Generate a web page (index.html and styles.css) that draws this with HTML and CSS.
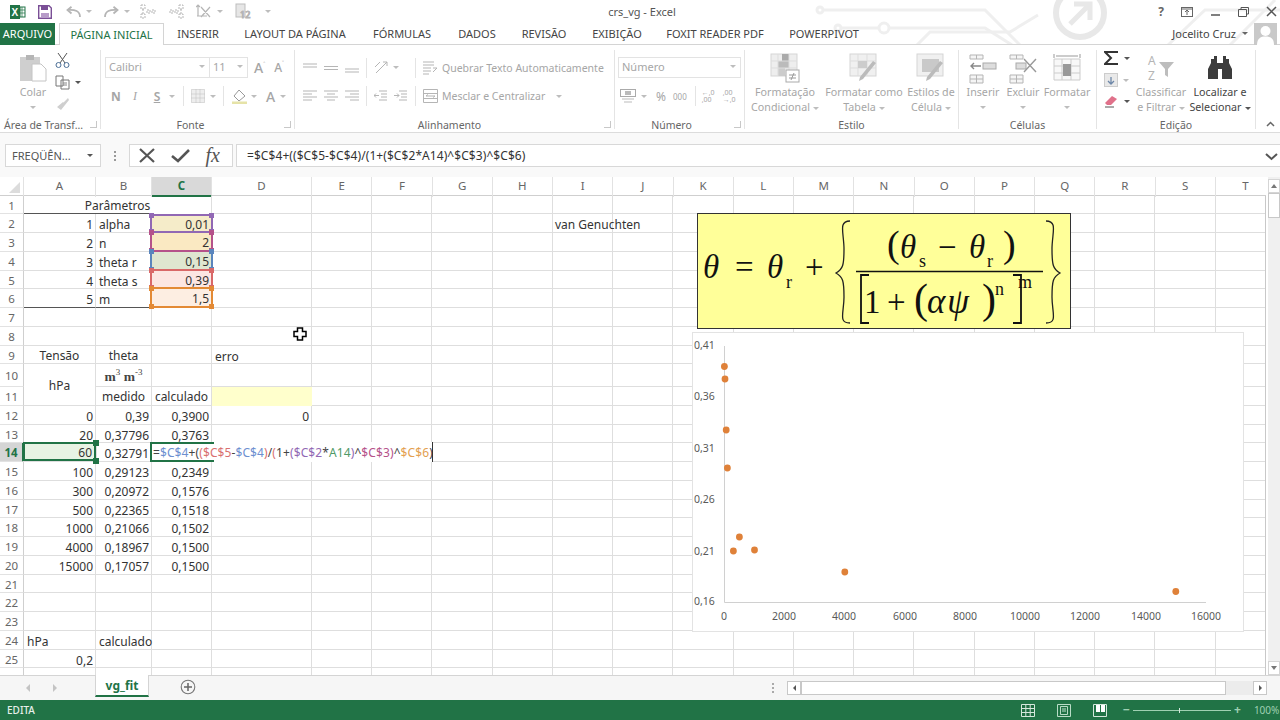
FILE: index.html
```html
<!DOCTYPE html>
<html lang="pt">
<head>
<meta charset="utf-8">
<title>crs_vg - Excel</title>
<link rel="stylesheet" href="styles.css">
</head>
<body>
<div class="app">

<header class="titlebar">
  <svg class="circuit" width="470" height="45" viewBox="810 0 470 45"><g fill="none" stroke="#efefef" stroke-width="3"><circle cx="820" cy="10" r="3"/><path d="M823 10H985L1020 45"/><circle cx="838" cy="28" r="3"/><path d="M841 28H878"/><circle cx="884" cy="28" r="5"/><path d="M889 28H985L1012 45"/><path d="M917 45L930 32H1010L1038 15"/><circle cx="1080" cy="13" r="24" stroke-width="6" stroke="#e8e8e8"/><path d="M1070 24L1090 4M1074 4H1090V20" stroke="#e8e8e8" stroke-width="5"/><path d="M1168 45L1205 10H1280"/><path d="M1230 45L1275 0"/></g></svg>
  <div class="qat">
    <svg class="ic xl" width="16" height="14" viewBox="0 0 16 14"><rect x="0" y="0" width="10" height="14" fill="#217346"/><rect x="10" y="2" width="5" height="10" fill="#fff" stroke="#217346"/><path d="M12 2v10M10 5h5M10 8h5" stroke="#217346" stroke-width=".7"/><text x="1.500" y="11" class="xl-x">X</text></svg>
    <svg class="ic save" width="14" height="14" viewBox="0 0 14 14"><path d="M.7.7H11L13.300 3V13.300H.7Z" fill="none" stroke="#7a4f96" stroke-width="1.400"/><rect x="3" y="1" width="7" height="4" fill="#7a4f96"/><rect x="3" y="8" width="8" height="5" fill="#b79cc8"/></svg>
    <svg class="ic gr undo" width="15" height="12" viewBox="0 0 15 12"><path d="M14 11C14 5 9 3.500 2 4M5.500 .8L1.500 4L5.500 7.500" fill="none" stroke-width="1.800"/></svg><i class="caret lt cq1"></i>
    <svg class="ic gr redo" width="15" height="12" viewBox="0 0 15 12"><path d="M1 11C1 5 6 3.500 13 4M9.500 .8L13.500 4L9.500 7.500" fill="none" stroke-width="1.800"/></svg><i class="caret lt cq1"></i>
    <svg class="ic gr q3" width="16" height="15" viewBox="0 0 16 15"><path d="M1 1h4v4H1zM1 10h4v4H1zM7 6h3v3H7zM12 6h3v3h-3zM3 5v5" fill="none" stroke-dasharray="2 1"/></svg>
    <svg class="ic gr q4" width="16" height="15" viewBox="0 0 16 15"><path d="M10 1h4v4h-4zM10 10h4v4h-4zM1 6h3v3H1zM6 6h3v3H6zM12 5v5" fill="none" stroke-dasharray="2 1"/></svg>
    <svg class="ic gr q5" width="18" height="15" viewBox="0 0 18 15"><path d="M2 1V12M0 3L2 1L4 3M1 12h10M5 3L14 13M14 3L5 13" fill="none" stroke-width="1.200"/></svg><i class="caret lt cq2"></i>
    <svg class="ic gr q6" width="18" height="22" viewBox="0 0 18 22"><rect x="1" y="3" width="9" height="13" fill="#e6e6e6" stroke="#bdbdbd"/><text x="5" y="17" class="twelve">12</text></svg>
    <i class="caret lt cq3"></i>
  </div>
  <div class="doc-title">crs_vg - Excel</div>
  <div class="winctl">
    <span class="help">?</span>
    <svg width="12" height="10" viewBox="0 0 12 10"><rect x=".5" y=".5" width="11" height="9" fill="none" stroke="#666"/><path d="M6 8V3M4 5L6 3L8 5M.5 2h11" fill="none" stroke="#666"/></svg>
    <svg width="11" height="10" viewBox="0 0 11 10"><path d="M1 8H10" stroke="#555" stroke-width="1.500"/></svg>
    <svg width="11" height="10" viewBox="0 0 11 10"><path d="M3 2.500V.5H10.500V7H8.500M.5 2.500H8.500V9.500H.5Z" fill="none" stroke="#555"/></svg>
    <svg width="11" height="11" viewBox="0 0 11 11"><path d="M1 1L10 10M10 1L1 10" stroke="#555" stroke-width="1.500"/></svg>
  </div>
</header>

<nav class="tabs">
  <div class="tab-file">ARQUIVO</div>
  <div class="tab tab-active">PÁGINA INICIAL</div>
  <div class="tab w-ins">INSERIR</div>
  <div class="tab w-lay">LAYOUT DA PÁGINA</div>
  <div class="tab w-for">FÓRMULAS</div>
  <div class="tab w-dad">DADOS</div>
  <div class="tab w-rev">REVISÃO</div>
  <div class="tab w-exi">EXIBIÇÃO</div>
  <div class="tab w-fox">FOXIT READER PDF</div>
  <div class="tab w-pow">POWERPIVOT</div>
  <div class="user"><span>Jocelito Cruz</span><i class="caret"></i>
    <svg class="avatar" width="23" height="22" viewBox="0 0 23 22"><rect width="23" height="22" fill="#c9c9c9"/><circle cx="11.500" cy="8" r="5" fill="#fff"/><path d="M3 22C3 15 7 13.500 11.500 13.500S20 15 20 22Z" fill="#fff"/></svg>
  </div>
</nav>

<section class="ribbon">
  <div class="grp g-clip">
    <div class="body clip-body">
      <div class="big colar">
        <svg class="bigicon" width="28" height="28" viewBox="0 0 28 28"><rect x="1" y="3" width="20" height="24" fill="#cfcfcf"/><rect x="7" y="1" width="8" height="5" fill="#b5b5b5"/><path d="M13 10H22L27 15V27H13Z" fill="#fff" stroke="#c4c4c4"/></svg>
        <div class="big-t">Colar</div><i class="caret lt"></i>
      </div>
      <div class="smallcol">
        <svg class="ic dk" width="15" height="16" viewBox="0 0 15 16"><path d="M3 1L10 11M12 1L5 11" fill="none" stroke="#555"/><circle cx="3.500" cy="13" r="2.500" fill="none" stroke="#4a6e96"/><circle cx="11.500" cy="13" r="2.500" fill="none" stroke="#4a6e96"/></svg>
        <div class="smrow"><svg width="15" height="15" viewBox="0 0 15 15"><path d="M1 1H8V11H1ZM6 5H14V14H6Z" fill="#fff" stroke="#777"/><path d="M8 8H12M8 10H12" stroke="#888"/></svg><i class="caret dk2"></i></div>
        <svg width="15" height="14" viewBox="0 0 15 14"><path d="M8 6L13 1L14 3L10 8ZM2 10L8 5L10 8L6 13Z" fill="#cfcfcf"/></svg>
      </div>
    </div>
    <div class="glabel lab-clip">Área de Transf...</div>
    <i class="launch"></i>
  </div>

  <div class="grp g-font">
    <div class="body col-body">
      <div class="frow f1">
        <div class="sel sel-font">Calibri<i class="caret lt"></i></div>
        <div class="sel sel-size">11<i class="caret lt"></i></div>
        <span class="fa a-big">A<sup>˄</sup></span>
        <span class="fa a-small">A<sup>˅</sup></span>
      </div>
      <div class="frow f2">
        <b class="fm fm-n">N</b><em class="fm fm-i">I</em><span class="fm fm-s">S</span><i class="caret lt c-s"></i><u class="sep s1"></u>
        <svg width="14" height="14" viewBox="0 0 14 14"><path d="M.5.500H13.500V13.500H.5ZM5 .5V13.500M9 .5V13.500M.5 5H13.500M.5 9H13.500" fill="#eee" stroke="#bfbfbf" stroke-dasharray="1 1"/></svg><i class="caret lt c-b"></i><u class="sep s2"></u>
        <svg width="15" height="15" viewBox="0 0 15 15"><path d="M7 1L13 7L7 12L2 7Z" fill="#fff" stroke="#999"/><rect y="12.500" width="15" height="2.500" fill="#e6e3a8"/></svg><i class="caret lt c-f"></i>
        <span class="fa a-col">A</span><i class="caret lt c-a"></i>
      </div>
    </div>
    <div class="glabel lab-font">Fonte</div>
    <i class="launch"></i>
  </div>

  <div class="grp g-align">
    <div class="body col-body">
      <div class="frow a1">
        <svg class="li" width="14" height="10" viewBox="0 0 14 10"><path d="M0 1H14M0 4H14"/></svg>
        <svg class="li" width="14" height="10" viewBox="0 0 14 10"><path d="M0 3.500H14M0 6.500H14"/></svg>
        <svg class="li" width="14" height="10" viewBox="0 0 14 10"><path d="M0 6H14M0 9H14"/></svg>
        <u class="sep"></u>
        <svg class="li" width="15" height="15" viewBox="0 0 15 15"><path d="M2 13L13 2M9 2H13V6M1 7L6 2"/></svg><i class="caret lt c-o"></i>
        <u class="sep s4"></u>
        <svg class="li" width="15" height="14" viewBox="0 0 15 14"><path d="M0 1H11M0 4H11M0 7H8M0 10H8M0 13H6M10 11L14 7L10 7"/></svg>
        <span class="wt">Quebrar Texto Automaticamente</span>
      </div>
      <div class="frow a2">
        <svg class="li" width="14" height="12" viewBox="0 0 14 12"><path d="M0 1H14M0 4H9M0 7H14M0 10H9"/></svg>
        <svg class="li" width="14" height="12" viewBox="0 0 14 12"><path d="M0 1H14M3 4H11M0 7H14M3 10H11"/></svg>
        <svg class="li" width="14" height="12" viewBox="0 0 14 12"><path d="M0 1H14M5 4H14M0 7H14M5 10H14"/></svg>
        <u class="sep"></u>
        <svg class="li" width="13" height="12" viewBox="0 0 13 12"><path d="M5 1H13M7 4H13M7 7H13M5 10H13M5 5.500H0M2 3.500L0 5.500L2 7.500"/></svg>
        <svg class="li" width="13" height="12" viewBox="0 0 13 12"><path d="M5 1H13M7 4H13M7 7H13M5 10H13M0 5.500H5M3 3.500L5 5.500L3 7.500"/></svg>
        <u class="sep s5"></u>
        <svg class="li" width="15" height="14" viewBox="0 0 15 14"><path d="M.5.500H14.500V13.500H.5ZM.5 4.500H14.500M.5 9.500H14.500M3 7H12M3 7L5 5.500M12 7L10 8.500"/></svg>
        <span class="wt">Mesclar e Centralizar</span><i class="caret lt c-m"></i>
      </div>
    </div>
    <div class="glabel lab-align">Alinhamento</div>
    <i class="launch"></i>
  </div>

  <div class="grp g-num">
    <div class="body col-body">
      <div class="frow n1"><div class="sel sel-num">Número<i class="caret lt"></i></div></div>
      <div class="frow n2">
        <svg width="16" height="14" viewBox="0 0 16 14"><rect x=".5" y=".5" width="15" height="7" fill="#fff" stroke="#aaa"/><rect x="5" y="2" width="6" height="4" fill="#bbb"/><path d="M2 10H14M4 13H12" stroke="#bbb"/></svg><i class="caret lt c-cur"></i>
        <span class="pct">%</span><span class="mil">000</span><u class="sep s6"></u>
        <span class="dec">←,0<br>,00</span><span class="dec d2">,00<br>→,0</span>
      </div>
    </div>
    <div class="glabel lab-num">Número</div>
    <i class="launch"></i>
  </div>

  <div class="grp g-est">
    <div class="body">
      <div class="big b-fc">
        <svg class="bigicon" width="30" height="30" viewBox="0 0 30 30"><rect x="1" y="1" width="26" height="22" fill="#eee" stroke="#d5d5d5"/><rect x="12" y="1" width="7" height="7" fill="#aaa"/><rect x="8" y="8" width="11" height="7" fill="#bbb"/><rect x="8" y="15" width="7" height="8" fill="#ccc"/><path d="M1 8H27M1 15H27M8 1V23M19 1V23" stroke="#ddd"/><rect x="16" y="17" width="13" height="12" fill="#fff" stroke="#aaa"/><path d="M19 22H26M19 25H26M24 20L21 27" stroke="#999"/></svg>
        <div class="big-t">Formatação<br>Condicional<i class="caret lt in"></i></div>
      </div>
      <div class="big b-ft">
        <svg class="bigicon" width="30" height="30" viewBox="0 0 30 30"><rect x="1" y="1" width="26" height="22" fill="#f0f0f0" stroke="#d5d5d5"/><path d="M1 8H27M1 15H27M9 1V23M18 1V23" stroke="#ddd"/><rect x="9" y="8" width="9" height="7" fill="#ccc"/><path d="M27 10L14 26L10 28L11 24L24 8Z" fill="#bbb"/></svg>
        <div class="big-t">Formatar como<br>Tabela<i class="caret lt in"></i></div>
      </div>
      <div class="big b-ec">
        <svg class="bigicon" width="30" height="30" viewBox="0 0 30 30"><rect x="1" y="1" width="26" height="22" fill="#f0f0f0" stroke="#d5d5d5"/><rect x="6" y="6" width="17" height="13" fill="#c9c9c9"/><path d="M27 10L14 26L10 28L11 24L24 8Z" fill="#bbb"/></svg>
        <div class="big-t">Estilos de<br>Célula<i class="caret lt in"></i></div>
      </div>
    </div>
    <div class="glabel">Estilo</div>
  </div>

  <div class="grp g-cel">
    <div class="body">
      <div class="big b-ins">
        <svg class="bigicon" width="28" height="30" viewBox="0 0 28 30"><path d="M1 2H14V6H1ZM7.500 2V6M1 22H14V30H1ZM7.500 22V30M1 26H14" fill="#f5f5f5" stroke="#b5b5b5"/><path d="M12 13H2M5 10L2 13L5 16" fill="none" stroke="#888" stroke-width="1.400"/><rect x="14" y="10" width="13" height="6" fill="#ddd" stroke="#aaa"/></svg>
        <div class="big-t">Inserir</div><i class="caret lt"></i>
      </div>
      <div class="big b-exc">
        <svg class="bigicon" width="28" height="30" viewBox="0 0 28 30"><path d="M1 2H14V6H1ZM7.500 2V6M1 22H14V30H1ZM7.500 22V30M1 26H14" fill="#f5f5f5" stroke="#b5b5b5"/><rect x="7" y="10" width="10" height="6" fill="#ddd" stroke="#aaa"/><path d="M15 6L27 19M27 6L15 19" stroke="#999" stroke-width="1.400"/></svg>
        <div class="big-t">Excluir</div><i class="caret lt"></i>
      </div>
      <div class="big b-fmt">
        <svg class="bigicon" width="28" height="30" viewBox="0 0 28 30"><path d="M1 6H27V27H1ZM1 13H27M1 20H27M9 6V27M18 6V27" fill="#f8f8f8" stroke="#ccc"/><rect x="10" y="11" width="8" height="12" fill="#999"/><path d="M1 1V5M27 1V5M3 3H25" stroke="#999"/></svg>
        <div class="big-t">Formatar</div><i class="caret lt"></i>
      </div>
    </div>
    <div class="glabel">Células</div>
  </div>

  <div class="grp g-ed">
    <div class="body">
      <div class="smallcol ed-small">
        <div class="smrow"><svg width="15" height="14" viewBox="0 0 15 14"><path d="M14 1H1L7 7L1 13H14" fill="none" stroke="#333" stroke-width="2"/></svg><i class="caret dk2"></i></div>
        <div class="smrow"><svg width="14" height="14" viewBox="0 0 14 14"><rect x=".5" y=".5" width="13" height="13" fill="#e9e9e9" stroke="#ccc"/><path d="M7 4V11M4 8L7 11L10 8" fill="none" stroke="#6d87a8" stroke-width="1.300"/></svg><i class="caret lt"></i></div>
        <div class="smrow"><svg width="15" height="13" viewBox="0 0 15 13"><path d="M1 8L8 1L13 4L7 10H3Z" fill="#e0718a"/><path d="M1 12H10" stroke="#555"/></svg><i class="caret dk2"></i></div>
      </div>
      <div class="big b-cl">
        <svg class="bigicon" width="28" height="30" viewBox="0 0 28 30"><text x="1" y="12" class="az">A</text><text x="1" y="27" class="az">Z</text><path d="M12 9H27L21 16V24L18 22V16Z" fill="#bdbdbd"/></svg>
        <div class="big-t">Classificar<br>e Filtrar<i class="caret lt in"></i></div>
      </div>
      <div class="big b-lo">
        <svg class="bigicon" width="26" height="30" viewBox="0 0 26 30"><path d="M4 6H10V10H16V6H22V10L25 16V26H15V16H11V26H1V16L4 10Z" fill="#3c3c3c"/><path d="M7 3H10V7H7ZM16 3H19V7H16Z" fill="#3c3c3c"/></svg>
        <div class="big-t dark">Localizar e<br>Selecionar<i class="caret in dk2"></i></div>
      </div>
    </div>
    <div class="glabel">Edição</div>
  </div>

  <svg class="collapse" width="9" height="6" viewBox="0 0 9 6"><path d="M1 5L4.500 1.500L8 5" fill="none" stroke="#666" stroke-width="1.500"/></svg>
</section>

<section class="fbar">
  <div class="namebox">FREQÜÊN...<i class="caret dk2"></i></div>
  <div class="dots"></div>
  <div class="fbtns">
    <svg width="16" height="15" viewBox="0 0 16 15"><path d="M1 1L15 14M15 1L1 14" stroke="#555" stroke-width="2.200"/></svg>
    <svg width="19" height="15" viewBox="0 0 19 15"><path d="M1 8L7 13L18 2" fill="none" stroke="#555" stroke-width="2.600"/></svg>
    <span class="fx">fx</span>
  </div>
  <div class="finput">=$C$4+(($C$5-$C$4)/(1+($C$2*A14)^$C$3)^$C$6)
    <svg class="fchev" width="13" height="8" viewBox="0 0 13 8"><path d="M1 1L6.500 6L12 1" fill="none" stroke="#555" stroke-width="2"/></svg>
  </div>
</section>

<main class="work">
  <div class="sheetarea">
    <div class="colhead">
      <div class="corner"><svg width="14" height="14" viewBox="0 0 14 14"><path d="M12 2V13H1Z" fill="#dcdcdc"/></svg></div>
      <div>A</div><div>B</div><div class="on">C</div><div>D</div><div>E</div><div>F</div><div>G</div><div>H</div><div>I</div><div>J</div><div>K</div><div>L</div><div>M</div><div>N</div><div>O</div><div>P</div><div>Q</div><div>R</div><div>S</div><div>T</div>
    </div>
    <div class="sheet">
      <div class="rh">1</div><div class="c span3 ctr dk-b-part">Parâmetros</div><div class="c"></div><div class="rest"></div>
      <div class="rh">2</div><div class="c r">1</div><div class="c l">alpha</div><div class="c r ref ref-p">0,01</div><div class="c"></div><div class="rest vg">van Genuchten</div>
      <div class="rh">3</div><div class="c r">2</div><div class="c l">n</div><div class="c r ref ref-m">2</div><div class="c"></div><div class="rest"></div>
      <div class="rh">4</div><div class="c r">3</div><div class="c l">theta r</div><div class="c r ref ref-b">0,15</div><div class="c"></div><div class="rest"></div>
      <div class="rh">5</div><div class="c r">4</div><div class="c l">theta s</div><div class="c r ref ref-r">0,39</div><div class="c"></div><div class="rest"></div>
      <div class="rh">6</div><div class="c r dkb">5</div><div class="c l dkb">m</div><div class="c r ref ref-o">1,5</div><div class="c"></div><div class="rest"></div>
      <div class="rh">7</div><div class="c"></div><div class="c"></div><div class="c"></div><div class="c"></div><div class="rest"></div>
      <div class="rh">8</div><div class="c"></div><div class="c"></div><div class="c"></div><div class="c"></div><div class="rest"></div>
      <div class="rh">9</div><div class="c ctr">Tensão</div><div class="c ctr">theta</div><div class="c"></div><div class="c l">erro</div><div class="rest"></div>
      <div class="rh rh10">10</div><div class="c ctr rs2">hPa</div><div class="c ctr serif"><span>m<sup>3</sup>&nbsp;m<sup>-3</sup></span></div><div class="c"></div><div class="c"></div><div class="rest"></div>
      <div class="rh">11</div><div class="c ctr">medido</div><div class="c ctr">calculado</div><div class="c yellow"></div><div class="rest"></div>
      <div class="rh">12</div><div class="c r">0</div><div class="c r">0,39</div><div class="c r">0,3900</div><div class="c r">0</div><div class="rest"></div>
      <div class="rh">13</div><div class="c r">20</div><div class="c r">0,37796</div><div class="c r">0,3763</div><div class="c"></div><div class="rest"></div>
      <div class="rh rh-on">14</div><div class="c r a14">60</div><div class="c r">0,32791</div><div class="c editcell"><div class="edit"><span>=</span><span class="fb">$C$4</span><span>+(</span><span class="fr">(</span><span class="fr">$C$5</span><span>-</span><span class="fb">$C$4</span><span class="fr">)</span><span>/</span><span class="fr">(</span><span>1+</span><span class="fp">(</span><span class="fp">$C$2</span><span>*</span><span class="fg">A14</span><span class="fp">)</span><span>^</span><span class="fm2">$C$3</span><span class="fm2">)</span><span>^</span><span class="fo">$C$6</span><span>)</span></div></div><div class="c"></div><div class="rest"></div>
      <div class="rh">15</div><div class="c r">100</div><div class="c r">0,29123</div><div class="c r">0,2349</div><div class="c"></div><div class="rest"></div>
      <div class="rh">16</div><div class="c r">300</div><div class="c r">0,20972</div><div class="c r">0,1576</div><div class="c"></div><div class="rest"></div>
      <div class="rh">17</div><div class="c r">500</div><div class="c r">0,22365</div><div class="c r">0,1518</div><div class="c"></div><div class="rest"></div>
      <div class="rh">18</div><div class="c r">1000</div><div class="c r">0,21066</div><div class="c r">0,1502</div><div class="c"></div><div class="rest"></div>
      <div class="rh">19</div><div class="c r">4000</div><div class="c r">0,18967</div><div class="c r">0,1500</div><div class="c"></div><div class="rest"></div>
      <div class="rh">20</div><div class="c r">15000</div><div class="c r">0,17057</div><div class="c r">0,1500</div><div class="c"></div><div class="rest"></div>
      <div class="rh">21</div><div class="c"></div><div class="c"></div><div class="c"></div><div class="c"></div><div class="rest"></div>
      <div class="rh">22</div><div class="c"></div><div class="c"></div><div class="c"></div><div class="c"></div><div class="rest"></div>
      <div class="rh">23</div><div class="c"></div><div class="c"></div><div class="c"></div><div class="c"></div><div class="rest"></div>
      <div class="rh">24</div><div class="c l">hPa</div><div class="c l">calculado</div><div class="c"></div><div class="c"></div><div class="rest"></div>
      <div class="rh">25</div><div class="c r">0,2</div><div class="c"></div><div class="c"></div><div class="c"></div><div class="rest"></div>
      <div class="rh"></div><div class="c"></div><div class="c"></div><div class="c"></div><div class="c"></div><div class="rest"></div>

      <svg class="equation" width="374" height="116" viewBox="0 0 374 116">
        <rect x=".5" y=".5" width="373" height="115" fill="#ffff99" stroke="#333"/>
        <text x="6" y="65" class="eq it">θ</text><text x="38" y="65" class="eq">=</text>
        <text x="70" y="65" class="eq it">θ</text><text x="89" y="75" class="eq sm">r</text>
        <text x="108" y="65" class="eq">+</text>
        <path d="M153 8C141 8 147 20 147 36C147 52 146 56 139 60C146 64 147 68 147 84C147 100 141 110 153 110" fill="none" stroke="#222" stroke-width="1.300"/>
        <text x="190" y="44" class="eq lg">(</text><text x="203" y="45" class="eq it">θ</text><text x="222" y="54" class="eq sm">s</text>
        <text x="241" y="45" class="eq">−</text><text x="272" y="45" class="eq it">θ</text><text x="290" y="54" class="eq sm">r</text><text x="306" y="44" class="eq lg">)</text>
        <path d="M159 58.500H346" stroke="#111" stroke-width="1.500"/>
        <path d="M172 62H164V110H172M316 62H324V110H316" fill="none" stroke="#111" stroke-width="1.800"/>
        <text x="167" y="100" class="eq">1</text><text x="190" y="100" class="eq">+</text><text x="217" y="100" class="eq xl2">(</text>
        <text x="230" y="100" class="eq it wide">αψ</text><text x="285" y="100" class="eq xl2">)</text>
        <text x="298" y="82" class="eq sm">n</text><text x="321" y="75" class="eq sm">m</text>
        <path d="M349 8C361 8 355 20 355 36C355 52 356 56 363 60C356 64 355 68 355 84C355 100 361 110 349 110" fill="none" stroke="#222" stroke-width="1.300"/>
      </svg>

      <svg class="chart" width="552" height="300" viewBox="692 332 552 300">
        <rect x="692.500" y="332.500" width="551" height="299" fill="#fff" stroke="#e3e3e3"/>
        <path d="M724.500 346V602.500H1206" fill="none" stroke="#d0d0d0"/>
        <g class="ylab">
          <text x="694" y="349">0,41</text><text x="694" y="400">0,36</text><text x="694" y="452">0,31</text><text x="694" y="503">0,26</text><text x="694" y="555">0,21</text><text x="694" y="605">0,16</text>
        </g>
        <g class="xlab">
          <text x="724" y="620">0</text><text x="784" y="620">2000</text><text x="844" y="620">4000</text><text x="905" y="620">6000</text><text x="965" y="620">8000</text><text x="1025" y="620">10000</text><text x="1085" y="620">12000</text><text x="1146" y="620">14000</text><text x="1206" y="620">16000</text>
        </g>
        <g fill="#df8139">
          <circle cx="724.400" cy="366.500" r="3.400"/><circle cx="725" cy="379" r="3.400"/><circle cx="726.200" cy="430" r="3.400"/><circle cx="727.400" cy="468" r="3.400"/><circle cx="733.400" cy="551" r="3.400"/><circle cx="739.400" cy="537" r="3.400"/><circle cx="754.500" cy="550" r="3.400"/><circle cx="844.800" cy="572" r="3.400"/><circle cx="1175.800" cy="591.500" r="3.400"/>
        </g>
      </svg>

      <svg class="cursor" width="14" height="14" viewBox="0 0 14 14"><path d="M4.500 1H9.500V4.500H13V9.500H9.500V13H4.500V9.500H1V4.500H4.500Z" fill="#fff" stroke="#000" stroke-width="1.500"/></svg>
    </div>
  </div>
  <aside class="vscroll">
    <div class="vbtn"><i class="tri-up"></i></div>
    <div class="vthumb"></div>
    <div class="vtrack"></div>
    <div class="vbtn"><i class="tri-dn"></i></div>
  </aside>
</main>

<section class="sheetbar">
  <i class="tri-l nav1"></i><i class="tri-r nav2"></i>
  <div class="sheet-tab">vg_fit</div>
  <svg class="addsheet" width="16" height="16" viewBox="0 0 16 16"><circle cx="8" cy="8" r="6.800" fill="none" stroke="#777" stroke-width="1.100"/><path d="M8 4V12M4 8H12" stroke="#666" stroke-width="1.500"/></svg>
  <div class="dots2"></div>
  <div class="hscroll">
    <div class="hbtn"><i class="tri-l dk3"></i></div>
    <div class="hthumb"></div>
    <div class="htrack"></div>
    <div class="hbtn"><i class="tri-r dk3"></i></div>
  </div>
</section>

<footer class="status">
  <span class="mode">EDITA</span>
  <svg class="v1" width="14" height="13" viewBox="0 0 14 13"><path d="M.5.500H13.500V12.500H.5ZM.5 4.500H13.500M.5 8.500H13.500M4.800.5V12.500M9.200.5V12.500" fill="#1d6b40" stroke="#d5e8dc"/></svg>
  <svg class="v2" width="14" height="13" viewBox="0 0 14 13"><path d="M.5.500H13.500V12.500H.5Z" fill="none" stroke="#b9dcc6"/><path d="M3.500 2.500H10.500V10.500H3.500ZM5 5H9M5 7H9" fill="none" stroke="#b9dcc6"/></svg>
  <svg class="v3" width="14" height="13" viewBox="0 0 14 13"><path d="M.5.500H13.500V12.500H.5Z" fill="none" stroke="#d5e8dc"/><path d="M3 1H7V8H3ZM8 1H12V8H8Z" fill="#fff"/></svg>
  <div class="zoom"><span class="zm">−</span><div class="ztrack"><i class="zknob"></i></div><span class="zm">+</span></div>
  <span class="pct100">100%</span>
</footer>

</div>
</body>
</html>
```

FILE: styles.css
```css
* { box-sizing: border-box; }
html, body { margin: 0; padding: 0; background: #fff; }
body { font-family: "Noto Sans", "Open Sans", sans-serif; color: #444; }
.app { width: 1280px; height: 720px; display: flex; flex-direction: column; overflow: hidden; position: relative; background: #fff; }
u { text-decoration: none; }
i { font-style: normal; display: block; }

.caret { width: 0; height: 0; border-left: 3px solid transparent; border-right: 3px solid transparent; border-top: 3px solid #666; flex: none; }
.caret.lt { border-top-color: #bdbdbd; }
.caret.dk2 { border-top-color: #555; }
.caret.in { display: inline-block; vertical-align: middle; margin-left: 3px; }

/* title bar */
.titlebar { height: 23px; flex: none; display: flex; align-items: center; position: relative; }
.circuit { position: absolute; left: 810px; top: 0; }
.qat { display: flex; align-items: center; padding-left: 10px; position: relative; }
.ic.gr { stroke: #b5b5b5; }
.xl-x { font: bold 10px "Liberation Sans", sans-serif; fill: #fff; }
.twelve { font: 9px "Noto Sans", sans-serif; fill: #777; }
.save { margin-left: 12px; }
.undo { margin-left: 14px; }
.cq1 { margin-left: 5px; }
.redo { margin-left: 12px; }
.q3 { margin-left: 10px; }
.q4 { margin-left: 13px; }
.q5 { margin-left: 11px; }
.cq2 { margin-left: 3px; }
.q6 { margin-left: 12px; }
.cq3 { margin-left: 12px; }
.doc-title { position: absolute; left: 0; right: 0; text-align: center; font-size: 11px; color: #555; padding-left: 4px; }
.winctl { margin-left: auto; display: flex; align-items: center; position: relative; gap: 17px; padding-right: 3px; }
.help { font-size: 12px; font-weight: 700; color: #666; margin-right: 0; }

/* tabs */
.tabs { height: 22px; flex: none; display: flex; align-items: stretch; border-bottom: 1px solid #d4d4d4; font-size: 11px; position: relative; }
.tab-file { width: 55px; background: #217346; color: #fff; text-align: center; line-height: 21px; margin-bottom: -1px; }
.tab { text-align: center; line-height: 22px; color: #444; flex: none; }
.tab-active { margin-left: 4px; width: 105px; color: #217346; background: #fff; border: 1px solid #d4d4d4; border-bottom: 0; height: 22px; }
.w-ins { width: 68px; } .w-lay { width: 126px; } .w-for { width: 88px; } .w-dad { width: 62px; } .w-rev { width: 72px; } .w-exi { width: 74px; } .w-fox { width: 122px; } .w-pow { width: 96px; }
.user { margin-left: auto; display: flex; align-items: center; gap: 6px; padding-right: 3px; color: #444; }

/* ribbon */
.ribbon { height: 88px; flex: none; display: flex; padding-top: 5px; border-bottom: 1px solid #dcdcdc; position: relative; }
.grp { display: flex; flex-direction: column; height: 79px; border-right: 1px solid #e4e4e4; position: relative; flex: none; }
.g-clip { width: 101px; } .g-font { width: 194px; } .g-align { width: 320px; } .g-num { width: 130px; } .g-est { width: 214px; } .g-cel { width: 138px; } .g-ed { width: 159px; }
.body { height: 69px; display: flex; flex: none; }
.glabel { height: 10px; line-height: 13px; font-size: 10.500px; text-align: center; color: #666; white-space: nowrap; }
.lab-clip { text-align: left; padding-left: 4px; }
.lab-font { padding-right: 14px; }
.lab-align { padding-right: 10px; }
.lab-num { padding-right: 16px; }
.launch { position: absolute; right: 3px; bottom: 1px; width: 7px; height: 7px; border: 1px solid #c8c8c8; border-width: 0 1px 1px 0; }
.big { display: flex; flex-direction: column; align-items: center; color: #a6a6a6; font-size: 10.700px; flex: none; }
.bigicon { height: 32px; flex: none; margin-top: 2px; }
.big-t { text-align: center; line-height: 15px; margin-top: 1px; white-space: nowrap; }
.big > .caret { margin-top: 6px; }
.big-t.dark { color: #444; }
.colar { width: 66px; }
.smallcol { display: flex; flex-direction: column; gap: 7px; padding-top: 2px; margin-left: -11px; }
.smrow { display: flex; align-items: center; gap: 5px; }
.col-body { flex-direction: column; }
.frow { display: flex; align-items: center; }
.f1 { height: 21px; margin-top: 7px; padding-left: 4px; }
.f2 { height: 22px; margin-top: 7px; }
.sel { height: 21px; border: 1px solid #e3e3e3; font-size: 11px; color: #a6a6a6; line-height: 17px; padding: 0 4px 2px 3px; display: flex; align-items: center; justify-content: space-between; }
.sel-font { width: 105px; }
.sel-size { width: 39px; margin-left: -1px; }
.fa { color: #a6a6a6; font-size: 14px; font-weight: 500; }
.fa sup { font-size: 7px; vertical-align: 6px; line-height: 0; }
.a-big { margin-left: 6px; }
.a-small { margin-left: 9px; font-size: 12px; }
.fm { color: #a6a6a6; font-size: 12px; font-style: normal; width: 12px; text-align: center; }
.fm-n { margin-left: 9px; }
.fm-i { margin-left: 7px; font-family: "Liberation Serif", serif; font-style: italic; }
.fm-s { margin-left: 10px; text-decoration: underline; font-weight: 600; }
.c-s { margin-left: 6px; }
.sep { display: block; width: 1px; height: 20px; background: #e4e4e4; flex: none; }
.s1 { margin: 0 7px 0 8px; }
.c-b { margin: 0 0 0 5px; }
.s2 { margin: 0 8px 0 7px; }
.c-f { margin-left: 4px; }
.a-col { margin-left: 9px; }
.c-a { margin-left: 5px; }
.li { fill: none; stroke: #b5b5b5; flex: none; }
.a1 { height: 21px; margin-top: 7px; padding-left: 8px; gap: 7px; }
.a2 { height: 22px; margin-top: 7px; padding-left: 8px; gap: 7px; }
.s4 { margin-left: 9px; }
.s5 { margin-left: 1px; }
.c-o { margin-left: -3px; }
.wt { font-size: 10.500px; color: #a6a6a6; white-space: nowrap; margin-left: -3px; }
.c-m { margin-left: 4px; }
.n1 { height: 21px; margin-top: 7px; padding-left: 3px; }
.sel-num { width: 123px; }
.n2 { height: 22px; margin-top: 7px; padding-left: 5px; }
.c-cur { margin-left: 5px; }
.pct { font-size: 12px; color: #a6a6a6; margin-left: 9px; }
.mil { font-size: 8px; color: #a6a6a6; margin-left: 7px; }
.s6 { margin: 0 6px 0 8px; }
.dec { font-size: 7px; line-height: 7px; color: #a6a6a6; width: 14px; }
.d2 { margin-left: 7px; }
.b-fc { width: 78px; margin-left: 1px; }
.b-ft { width: 80px; }
.b-ec { width: 54px; }
.b-ins { width: 46px; margin-left: 1px; }
.b-exc { width: 34px; }
.b-fmt { width: 54px; }
.ed-small { margin-left: 7px; width: 27px; flex: none; gap: 8px; padding-top: 1px; }
.b-cl { width: 60px; }
.b-lo { width: 58px; }
.az { font: 12px "Noto Sans", sans-serif; fill: #b5b5b5; }
.collapse { position: absolute; right: 5px; bottom: 5px; }

/* formula bar */
.fbar { height: 44px; flex: none; background: #f9f9f9; display: flex; align-items: flex-start; padding: 11px 0 0 5px; font-size: 11px; }
.namebox { width: 96px; height: 23px; background: #fff; border: 1px solid #d8d8d8; display: flex; align-items: center; justify-content: space-between; padding: 0 7px 0 6px; color: #555; }
.dots { width: 2px; height: 10px; margin: 7px 13px 0 13px; background: repeating-linear-gradient(#999 0 2px, transparent 2px 4px); }
.fbtns { width: 104px; height: 23px; background: #fff; border: 1px solid #d8d8d8; display: flex; align-items: center; justify-content: space-between; padding: 0 12px 0 9px; }
.fx { font: italic 20px "Liberation Serif", serif; color: #555; }
.finput { flex: 1; height: 23px; background: #fff; border: 1px solid #d8d8d8; border-right: 0; margin-left: 3px; padding-left: 10px; line-height: 21px; color: #333; font-size: 12px; letter-spacing: .07px; position: relative; }
.fchev { position: absolute; right: 2px; top: 8px; }

/* sheet */
.work { flex: 1; min-height: 0; display: flex; }
.sheetarea { width: 1266px; display: flex; flex-direction: column; overflow: hidden; position: relative; }
.colhead { height: 18.500px; flex: none; display: grid; grid-template-columns: 24px 72px 56px 60px 100px repeat(16, 60.250px); font-size: 11.500px; color: #666; border-bottom: 1px solid #cfcfcf; background: #fff; }
.colhead > div { text-align: center; line-height: 18px; border-right: 1px solid #e2e2e2; }
.colhead .on { background: #d9d9d9; color: #217346; font-weight: 700; border-bottom: 2px solid #217346; }
.corner { display: flex; align-items: center; justify-content: flex-end; padding-right: 1px; }
.sheet { flex: 1; min-height: 0; overflow: hidden; display: grid; grid-template-columns: 24px 72px 56px 60px 100px 954px; grid-template-rows: repeat(9, 18.750px) 22.750px repeat(16, 18.750px); font-size: 12px; color: #333; position: relative; border-right: 1px solid #c8c8c8; }
.rh { text-align: center; color: #666; line-height: 20px; border-right: 1px solid #cfcfcf; border-bottom: 1px solid #e2e2e2; background: #fff; font-size: 11.500px; }
.rh10 { line-height: 24px; }
.rh-on { background: #d5d5d5; color: #217346; font-weight: 700; border-right: 2px solid #217346; }
.c { border-right: 1px solid #dedede; border-bottom: 1px solid #dedede; line-height: 21px; white-space: nowrap; position: relative; }
.rest { border-bottom: 1px solid #dedede; line-height: 21px; background: repeating-linear-gradient(90deg, transparent 0 59.250px, #dedede 59.250px 60.250px); }
.r { text-align: right; padding-right: 2px; }
.l { padding-left: 3px; }
.ctr { text-align: center; display: flex; align-items: center; justify-content: center; padding-top: 2px; }
.span3 { grid-column: span 3; }
.dk-b-part { border-bottom: 0; }
.dk-b-part::after { content: ""; position: absolute; left: 0; width: 128px; bottom: 0; border-bottom: 1px solid #555; }
.dkb { border-bottom: 1px solid #555; }
.rs2 { grid-row: span 2; }
.vg { padding-left: 243px; }
.serif { font-family: "Liberation Serif", serif; font-size: 13.500px; font-weight: 700; color: #444; padding-top: 3px; }
.serif sup { font-size: 9px; line-height: 0; vertical-align: 6px; font-weight: 400; }
.yellow { background: #ffffcc; border-right-color: #ffffcc; border-bottom-color: #ffffcc; }

.ref { --h: #888; border: 0; border-left: 2px solid var(--h); border-right: 2px solid var(--h); border-bottom: 2px solid var(--h); z-index: 2; line-height: 20px; padding-right: 2px; margin: 0 -1px 0 -2px; }
.ref::after { content: ""; position: absolute; left: -3px; right: -3px; top: -3px; bottom: -3px; background:
  linear-gradient(var(--h), var(--h)) left top / 5px 5px no-repeat,
  linear-gradient(var(--h), var(--h)) right top / 5px 5px no-repeat,
  linear-gradient(var(--h), var(--h)) left bottom / 5px 5px no-repeat,
  linear-gradient(var(--h), var(--h)) right bottom / 5px 5px no-repeat; }
.ref-p { --h: #9168b4; background: #f5ecc9; border-top: 2px solid var(--h); line-height: 18px; }
.ref-m { --h: #b5528a; background: #fae9c2; }
.ref-b { --h: #5a85bd; background: #dfe6d0; border-bottom-color: #d96868; }
.ref-r { --h: #d96868; background: #fce6e2; border-bottom-color: #e38a35; }
.ref-o { --h: #e38a35; background: #fdeee2; }

.a14 { background: #e8f3e4; box-shadow: inset 0 2px 0 #217346, inset 0 -2px 0 #217346, inset 2px 0 0 #217346, inset -2px 0 0 #217346; z-index: 2; padding-right: 4px; margin: -1px -1px 0 -1px; }
.a14::after { content: ""; position: absolute; right: -3px; bottom: -3px; width: 6px; height: 6px; background: #217346; }
.a14::before { content: ""; position: absolute; right: -3px; top: -2px; width: 6px; height: 6px; background: #217346; }
.editcell { z-index: 3; border: 0; }
.edit { position: absolute; left: -2px; top: -1px; height: 20px; width: 283px; padding-left: 3px; line-height: 21px; background: linear-gradient(#217346, #217346) 0 0 / 64px 2px no-repeat, linear-gradient(#217346, #217346) 0 bottom / 64px 2px no-repeat, linear-gradient(#217346, #217346) 0 0 / 2px 100% no-repeat, #fff; color: #444; border-right: 1px solid #333; font-size: 12px; letter-spacing: .1px; white-space: nowrap; overflow: hidden; }
.fb { color: #6d8fd0; } .fr { color: #d97070; } .fp { color: #9168b4; } .fg { color: #4f9a68; } .fm2 { color: #b5528a; } .fo { color: #e3a04f; }

.equation { position: absolute; left: 697px; top: 17.500px; z-index: 4; }
.eq { font-family: "Liberation Serif", serif; font-size: 33px; fill: #111; }
.eq.it { font-style: italic; }
.eq.wide { letter-spacing: 2px; font-size: 35px; }
.eq.sm { font-size: 18px; }
.eq.lg { font-size: 38px; }
.eq.xl2 { font-size: 42px; font-weight: 400; }
.chart { position: absolute; left: 692px; top: 136.500px; z-index: 4; }
.ylab text { font-size: 10.500px; fill: #595959; }
.xlab text { font-size: 10.500px; fill: #595959; text-anchor: middle; }
.cursor { position: absolute; left: 293px; top: 131px; z-index: 5; }

.vscroll { width: 14px; display: flex; flex-direction: column; padding: 2px 0 0 2px; background: linear-gradient(#fff, #fff) 0 0 / 2px 100% no-repeat, #f0f0f0; }
.vbtn { height: 14px; background: #fff; border: 1px solid #d5d5d5; display: flex; align-items: center; justify-content: center; flex: none; }
.tri-up { border: 3px solid transparent; border-bottom: 4px solid #777; border-top: 0; }
.tri-dn { border: 3px solid transparent; border-top: 4px solid #777; border-bottom: 0; }
.vthumb { height: 25px; background: #fff; border: 1px solid #c8c8c8; flex: none; }
.vtrack { flex: 1; }

.sheetbar { height: 25px; flex: none; background: #f6f6f6; display: flex; align-items: flex-start; border-top: 1px solid #d4d4d4; position: relative; }
.tri-l { border: 4px solid transparent; border-right: 4px solid #c4c4c4; border-left: 0; }
.tri-r { border: 4px solid transparent; border-left: 4px solid #c4c4c4; border-right: 0; }
.nav1 { margin: 8px 0 0 26px; }
.nav2 { margin: 8px 0 0 23px; }
.sheet-tab { margin-left: 38px; width: 54px; height: 22px; background: #fff; border-left: 1px solid #d4d4d4; border-right: 1px solid #d4d4d4; border-bottom: 2px solid #217346; margin-top: -1px; color: #217346; font-weight: 700; font-size: 12px; text-align: center; line-height: 21px; }
.addsheet { margin: 3px 0 0 31px; }
.dots2 { width: 2px; height: 10px; margin: 7px 0 0 576px; background: repeating-linear-gradient(#aaa 0 2px, transparent 2px 4px); }
.hscroll { margin: 5px 0 0 13px; width: 480px; height: 14px; display: flex; background: #ececec; }
.hbtn { width: 14px; height: 14px; flex: none; background: #fff; border: 1px solid #c8c8c8; display: flex; align-items: center; justify-content: center; }
.dk3 { border-width: 3px; }
.tri-l.dk3 { border-right-color: #555; }
.tri-r.dk3 { border-left-color: #555; }
.hthumb { width: 425px; background: #fff; border: 1px solid #c8c8c8; flex: none; }
.htrack { flex: 1; }

.status { height: 20px; flex: none; background: #217346; display: flex; align-items: center; color: #fff; font-size: 10px; }
.mode { margin-left: 7px; color: #e6f0ea; font-weight: 500; }
.v1 { margin-left: 986px; }
.v2 { margin-left: 22px; }
.v3 { margin-left: 22px; }
.zoom { margin-left: 16px; width: 118px; display: flex; align-items: center; gap: 3px; color: #9fd0b2; }
.zm { font-size: 12px; line-height: 12px; font-weight: 700; }
.ztrack { flex: 1; height: 1px; background: #9fd0b2; position: relative; }
.zknob { position: absolute; left: 47%; top: -2px; width: 1px; height: 5px; background: #d5e8dc; }
.pct100 { margin-left: 13px; color: #9fd0b2; }
```
